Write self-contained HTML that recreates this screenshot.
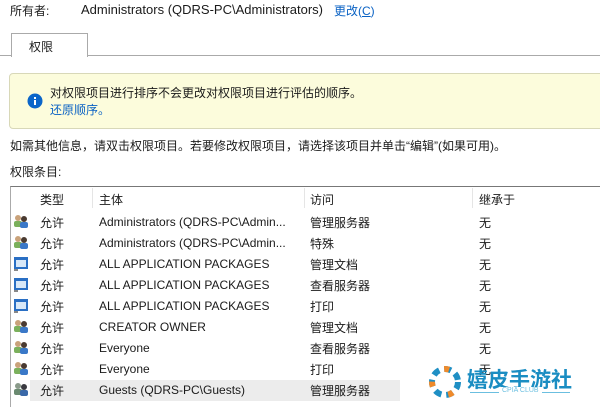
<!DOCTYPE html><html><head><meta charset="utf-8"><style>
body{margin:0;width:600px;height:406px;overflow:hidden;background:#fff;font-family:"Liberation Sans","Noto Sans CJK SC",sans-serif;font-size:12px;color:#1a1a1a;position:relative}
.a{position:absolute;white-space:nowrap}
.row{position:absolute;left:11px;width:589px;height:21px}
.row span{position:absolute;top:4px}
.ic{position:absolute;left:2px;top:3px;width:16px;height:15px}
</style></head><body>
<div class="a" style="left:10px;top:2px">所有者:</div>
<div class="a" style="left:81px;top:2px;font-size:13px">Administrators (QDRS-PC\Administrators)</div>
<div class="a" style="left:334px;top:2px;color:#0a62c4">更改(<u>C</u>)</div>
<div class="a" style="left:0;top:55px;width:600px;border-top:1px solid #aaa"></div>
<div class="a" style="left:11px;top:33px;width:75px;height:23px;border:1px solid #aaa;border-bottom:none;background:#fff"></div>
<div class="a" style="left:29px;top:38px">权限</div>
<div class="a" style="left:9px;top:73px;width:600px;height:54px;background:#fcfcdc;border:1px solid #d8d8b8;border-radius:4px"></div>
<svg class="a" style="left:27px;top:93px" width="16" height="16"><circle cx="8" cy="8" r="7.5" fill="#0b66c9"/><rect x="7" y="7" width="2" height="5" fill="#fff"/><rect x="7" y="4" width="2" height="2" fill="#fff"/></svg>
<div class="a" style="left:50px;top:84px">对权限项目进行排序不会更改对权限项目进行评估的顺序。</div>
<div class="a" style="left:50px;top:101px;color:#0a62c4">还原顺序。</div>
<div class="a" style="left:10px;top:137px">如需其他信息，请双击权限项目。若要修改权限项目，请选择该项目并单击“编辑”(如果可用)。</div>
<div class="a" style="left:10px;top:163px">权限条目:</div>
<div class="a" style="left:10px;top:186px;width:590px;height:220px;border-top:1px solid #777;border-left:1px solid #aaa"></div>
<div class="a" style="left:92px;top:188px;height:20px;border-left:1px solid #e5e5e5"></div>
<div class="a" style="left:304px;top:188px;height:20px;border-left:1px solid #e5e5e5"></div>
<div class="a" style="left:472px;top:188px;height:20px;border-left:1px solid #e5e5e5"></div>
<div class="a" style="left:40px;top:191px">类型</div>
<div class="a" style="left:99px;top:191px">主体</div>
<div class="a" style="left:310px;top:191px">访问</div>
<div class="a" style="left:479px;top:191px">继承于</div>
<div class="a" style="left:30px;top:380px;width:370px;height:21px;background:#ececec"></div>
<div class="row" style="top:211px"><svg class="ic"><circle cx="5" cy="4" r="3" fill="#c9a27a"/><rect x="1" y="7" width="8" height="6" rx="2" fill="#7bb05c"/><circle cx="11" cy="5" r="3" fill="#4a3a30"/><rect x="7" y="8" width="8" height="6" rx="2" fill="#3a78c8"/></svg><span style="left:29px;top:3px">允许</span><span style="left:88px">Administrators (QDRS-PC\Admin...</span><span style="left:299px;top:3px">管理服务器</span><span style="left:468px;top:3px">无</span></div>
<div class="row" style="top:232px"><svg class="ic"><circle cx="5" cy="4" r="3" fill="#c9a27a"/><rect x="1" y="7" width="8" height="6" rx="2" fill="#7bb05c"/><circle cx="11" cy="5" r="3" fill="#4a3a30"/><rect x="7" y="8" width="8" height="6" rx="2" fill="#3a78c8"/></svg><span style="left:29px;top:3px">允许</span><span style="left:88px">Administrators (QDRS-PC\Admin...</span><span style="left:299px;top:3px">特殊</span><span style="left:468px;top:3px">无</span></div>
<div class="row" style="top:253px"><svg class="ic"><rect x="1" y="1" width="14" height="12" fill="#2a6fc4"/><rect x="3" y="4" width="10" height="7" fill="#d8e8f8"/><rect x="1" y="13" width="4" height="2" fill="#888"/></svg><span style="left:29px;top:3px">允许</span><span style="left:88px">ALL APPLICATION PACKAGES</span><span style="left:299px;top:3px">管理文档</span><span style="left:468px;top:3px">无</span></div>
<div class="row" style="top:274px"><svg class="ic"><rect x="1" y="1" width="14" height="12" fill="#2a6fc4"/><rect x="3" y="4" width="10" height="7" fill="#d8e8f8"/><rect x="1" y="13" width="4" height="2" fill="#888"/></svg><span style="left:29px;top:3px">允许</span><span style="left:88px">ALL APPLICATION PACKAGES</span><span style="left:299px;top:3px">查看服务器</span><span style="left:468px;top:3px">无</span></div>
<div class="row" style="top:295px"><svg class="ic"><rect x="1" y="1" width="14" height="12" fill="#2a6fc4"/><rect x="3" y="4" width="10" height="7" fill="#d8e8f8"/><rect x="1" y="13" width="4" height="2" fill="#888"/></svg><span style="left:29px;top:3px">允许</span><span style="left:88px">ALL APPLICATION PACKAGES</span><span style="left:299px;top:3px">打印</span><span style="left:468px;top:3px">无</span></div>
<div class="row" style="top:316px"><svg class="ic"><circle cx="5" cy="4" r="3" fill="#c9a27a"/><rect x="1" y="7" width="8" height="6" rx="2" fill="#7bb05c"/><circle cx="11" cy="5" r="3" fill="#4a3a30"/><rect x="7" y="8" width="8" height="6" rx="2" fill="#3a78c8"/></svg><span style="left:29px;top:3px">允许</span><span style="left:88px">CREATOR OWNER</span><span style="left:299px;top:3px">管理文档</span><span style="left:468px;top:3px">无</span></div>
<div class="row" style="top:337px"><svg class="ic"><circle cx="5" cy="4" r="3" fill="#c9a27a"/><rect x="1" y="7" width="8" height="6" rx="2" fill="#7bb05c"/><circle cx="11" cy="5" r="3" fill="#4a3a30"/><rect x="7" y="8" width="8" height="6" rx="2" fill="#3a78c8"/></svg><span style="left:29px;top:3px">允许</span><span style="left:88px">Everyone</span><span style="left:299px;top:3px">查看服务器</span><span style="left:468px;top:3px">无</span></div>
<div class="row" style="top:358px"><svg class="ic"><circle cx="5" cy="4" r="3" fill="#c9a27a"/><rect x="1" y="7" width="8" height="6" rx="2" fill="#7bb05c"/><circle cx="11" cy="5" r="3" fill="#4a3a30"/><rect x="7" y="8" width="8" height="6" rx="2" fill="#3a78c8"/></svg><span style="left:29px;top:3px">允许</span><span style="left:88px">Everyone</span><span style="left:299px;top:3px">打印</span><span style="left:468px;top:3px">无</span></div>
<div class="row" style="top:379px"><svg class="ic"><circle cx="5" cy="4" r="3" fill="#8a9a8a"/><rect x="1" y="7" width="8" height="6" rx="2" fill="#6a8a70"/><circle cx="11" cy="5" r="3" fill="#3a3a40"/><rect x="7" y="8" width="8" height="6" rx="2" fill="#3a68a8"/></svg><span style="left:29px;top:3px">允许</span><span style="left:88px">Guests (QDRS-PC\Guests)</span><span style="left:299px;top:3px">管理服务器</span></div>
<svg class="a" style="left:427px;top:364px" width="36" height="36"><g fill="none" stroke-width="6" stroke-dasharray="7 5"><circle cx="18" cy="18" r="13" stroke="#1f8fc4"/><circle cx="18" cy="18" r="13" stroke="#f08a2a" stroke-dashoffset="12" stroke-dasharray="5 19"/></g></svg>
<div class="a" style="left:467px;top:364px;font-size:21px;font-weight:bold;color:#1a8dc2">嬉皮手游社</div>
<div class="a" style="left:470px;top:392px;width:100px;border-top:1px solid #6bbfe0"></div>
<div class="a" style="left:499px;top:387px;font-size:7px;color:#6bbfe0;background:#fff;padding:0 3px">CPIA CLUB</div>
</body></html>
